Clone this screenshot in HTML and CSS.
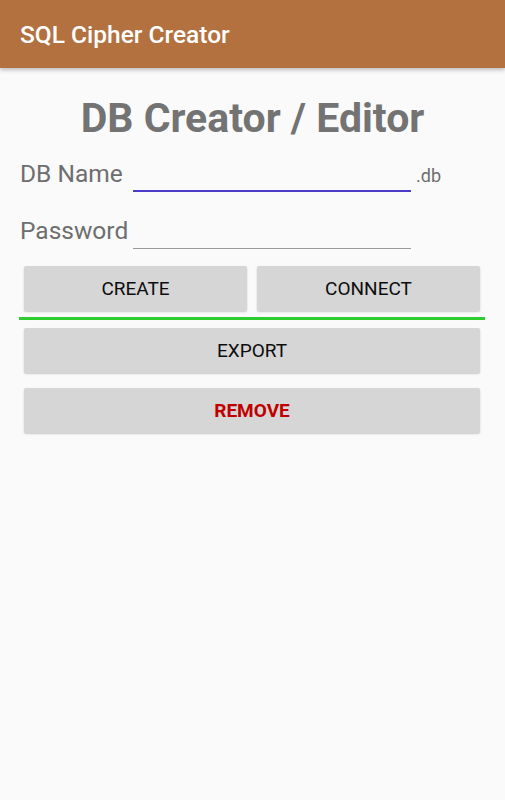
FILE: index.html
```html
<!doctype html>
<html>
<head>
<meta charset="utf-8">
<meta name="viewport" content="width=device-width, initial-scale=1.0">
<link rel="stylesheet" href="styles.css">
<title>SQL Cipher Creator</title>
</head>
<body>
<header class="appbar">
    <span class="appbar-title">SQL Cipher Creator</span>
</header>

<main class="content">
    <h1 class="page-title">DB Creator / Editor</h1>

    <div class="field field-first">
        <label class="field-label" for="dbname">DB Name</label>
        <div class="field-input focused" id="dbname"></div>
        <span class="field-suffix">.db</span>
    </div>

    <div class="field">
        <label class="field-label" for="password">Password</label>
        <div class="field-input" id="password"></div>
    </div>

    <div class="btn-row">
        <button class="btn">CREATE</button>
        <button class="btn">CONNECT</button>
    </div>

    <hr class="divider">

    <div class="btn-stack">
        <button class="btn">EXPORT</button>
        <button class="btn btn-danger">REMOVE</button>
    </div>
</main>
</body>
</html>
```

FILE: styles.css
```css
html,
body {
    margin: 0;
    padding: 0;
}
body {
    font-family: Roboto, "Liberation Sans", Arial, sans-serif;
    background-color: #fafafa;
    color: #757575;
    height: 800px;
}

.appbar {
    height: 68px;
    background-color: #b37140;
    display: flex;
    align-items: center;
    padding: 0 20px;
    box-shadow: 0 2px 4px rgba(0, 0, 0, 0.25);
}
.appbar-title {
    color: #fff;
    font-size: 24.5px;
    font-weight: 500;
}

.content {
    padding: 25px 0 0 0;
}

.page-title {
    margin: 0;
    text-align: center;
    font-size: 41px;
    font-weight: 700;
    line-height: 50px;
    color: #737373;
}

.field {
    display: flex;
    align-items: flex-end;
    padding: 0 20px;
    height: 57px;
}
.field-first {
    height: 49px;
}
.field-label {
    font-size: 24.5px;
    line-height: 30px;
    color: #6e6e6e;
    width: 113px;
    padding-bottom: 3px;
}
.field-input {
    width: 278px;
    height: 40px;
    border-bottom: 1px solid #9a9a9a;
}
.field-input.focused {
    border-bottom: 2px solid #4b3bc8;
}
.field-suffix {
    font-size: 18px;
    color: #6e6e6e;
    margin-left: 5px;
    padding-bottom: 6px;
}

.btn-row {
    display: grid;
    grid-template-columns: 1fr 1fr;
    gap: 10px;
    padding: 0 25px 0 24px;
    margin-top: 17px;
}
.btn-stack {
    display: flex;
    flex-direction: column;
    gap: 15px;
    padding: 0 25px 0 24px;
}
.btn {
    height: 45px;
    border: none;
    border-radius: 2px;
    background-color: #d6d6d6;
    box-shadow: 0 1px 2px rgba(0, 0, 0, 0.2);
    font-family: Roboto, "Liberation Sans", Arial, sans-serif;
    font-size: 19px;
    font-weight: 400;
    color: #0d0d0d;
    padding: 0;
}
.btn-danger {
    color: #c00000;
    font-weight: 700;
}

.divider {
    border: 0;
    height: 3px;
    background-color: #2ecc2e;
    margin: 6px 20px 8px 19px;
}
```
